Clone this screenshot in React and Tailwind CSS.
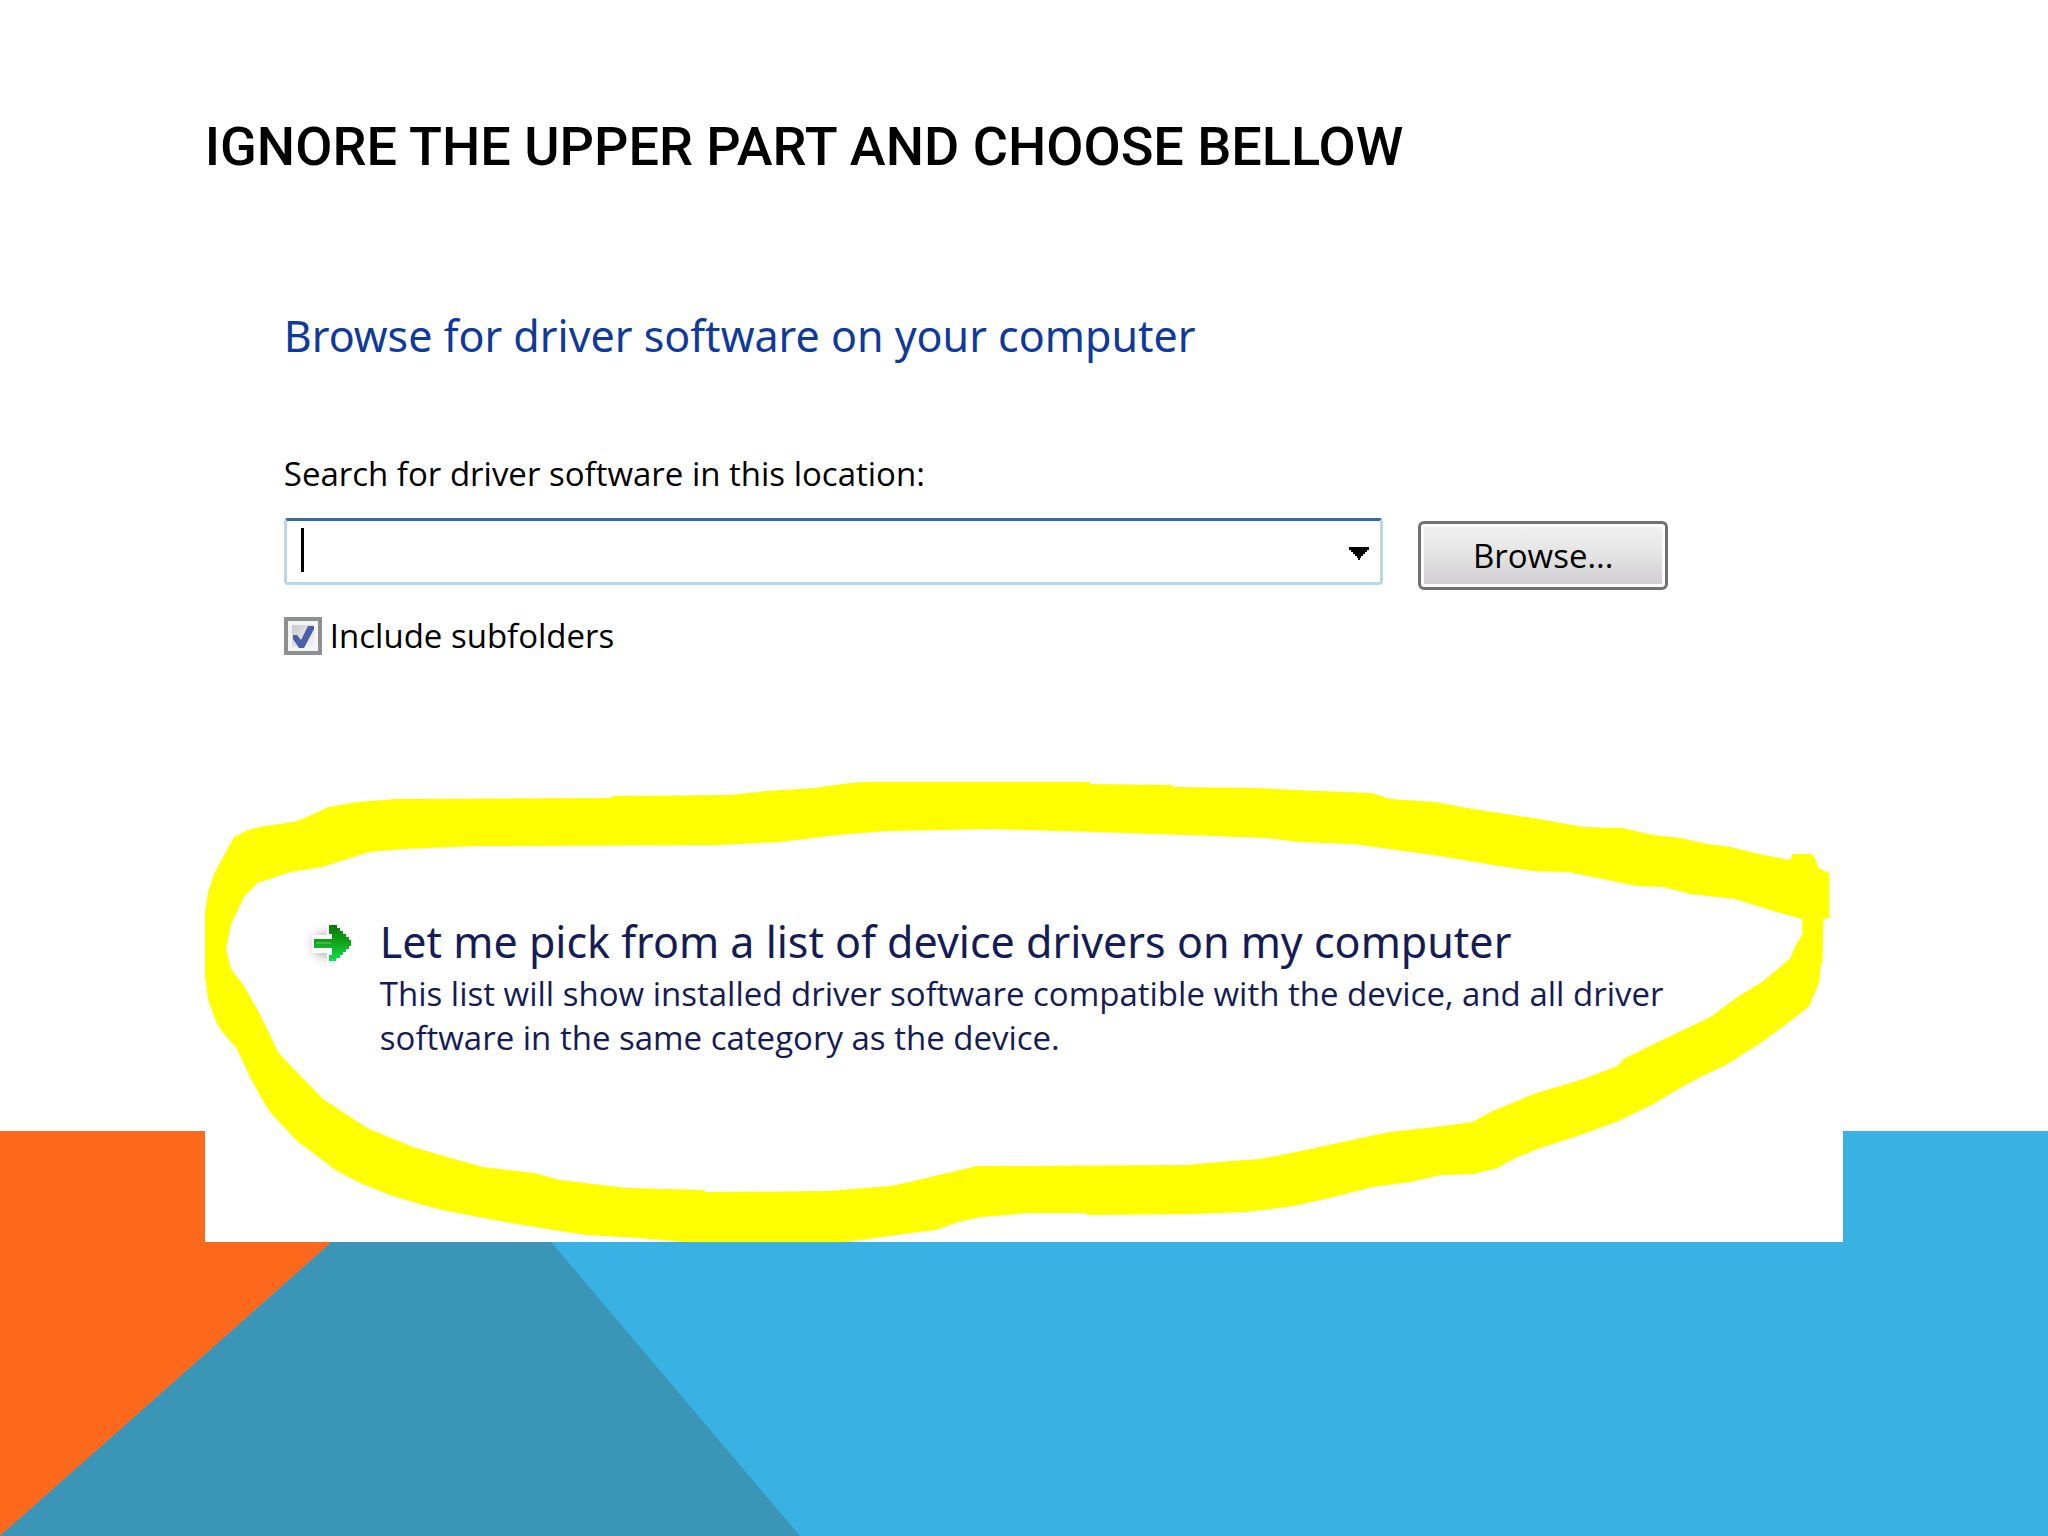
import { useState } from 'react'

const MARKER_OUTER =
    'M205 913L208 893L215 873L223 858L234 838L248 831L264 827L280 825L297 822L318 813L328 808L340 806L357 803L395 800L612 799L612 797L730 796L766 792L815 789L842 785L862 783L1090 783L1090 785L1173 786L1173 788L1255 789L1317 792L1372 794L1390 800L1435 803L1473 810L1533 819L1583 828L1622 829L1653 836L1680 839L1707 845L1730 848L1763 856L1790 861L1792 855L1811 855L1815 860L1818 869L1829 874L1829 919L1823 920L1822 965L1820 967L1819 983L1813 997L1809 1007L1790 1022L1760 1044L1727 1065L1700 1078L1678 1090L1653 1105L1618 1122L1580 1136L1537 1150L1513 1160L1497 1169L1473 1175L1440 1176L1410 1183L1372 1188L1333 1198L1293 1207L1245 1213L1193 1215L1087 1216L1086 1214L1028 1214L980 1218L958 1223L935 1231L910 1234L875 1239L844 1243L688 1243L639 1239L587 1236L560 1232L500 1222L447 1212L423 1206L390 1196L360 1184L337 1172L297 1142L270 1113L262 1100L250 1078L237 1050L220 1030L215 1020L208 1000L205 977Z'

const MARKER_INNER =
    'M226 950L231 925L244 898L257 884L290 873L322 868L369 853L402 850L476 847L719 846L779 843L837 836L886 832L942 831L990 830L1097 833L1187 836L1267 839L1300 843L1353 845L1390 850L1440 857L1493 866L1533 872L1568 873L1637 887L1663 888L1690 895L1735 900L1773 912L1802 920L1802 935L1795 947L1790 959L1763 982L1737 998L1710 1018L1670 1037L1623 1060L1617 1067L1583 1080L1533 1095L1490 1113L1472 1123L1435 1128L1390 1133L1370 1137L1310 1150L1260 1160L1230 1162L1187 1166L977 1167L947 1174L910 1183L890 1187L828 1192L706 1193L703 1191L627 1189L560 1181L534 1174L483 1168L440 1156L413 1148L367 1129L323 1100L287 1063L278 1053L268 1032L258 1012L244 987L231 970Z'

function SlideBackground() {
    return (
        <svg
            className="absolute inset-x-0 bottom-0 -z-10 h-[405px] w-full"
            viewBox="0 0 2048 405"
            preserveAspectRatio="none"
            aria-hidden="true"
        >
            <rect width="2048" height="405" fill="#39b2e3" />
            <path d="M0 0H457L0 405Z" fill="#fd691c" />
            <path d="M457 0L800 405H0Z" fill="#3b95b6" />
        </svg>
    )
}

function MarkerCircle() {
    return (
        <svg
            className="pointer-events-none absolute inset-x-0 bottom-0 w-full"
            viewBox="205 780 1638 463"
            aria-hidden="true"
        >
            <path d={`${MARKER_OUTER}${MARKER_INNER}`} fill="#ffff00" fillRule="evenodd" />
        </svg>
    )
}

function ArrowIcon() {
    return (
        <svg className="h-[60px] w-[60px] shrink-0" viewBox="0 0 60 60" aria-hidden="true">
            <defs>
                <linearGradient id="arrow-fill" x1="0" y1="0" x2="0" y2="1">
                    <stop offset="0" stopColor="#0a7a0a" />
                    <stop offset="0.5" stopColor="#12a51c" />
                    <stop offset="1" stopColor="#10e050" />
                </linearGradient>
                <radialGradient id="arrow-shadow">
                    <stop offset="0.4" stopColor="#cfcfcf" />
                    <stop offset="1" stopColor="#ffffff" stopOpacity="0" />
                </radialGradient>
            </defs>
            <ellipse cx="25" cy="33" rx="25" ry="24" fill="url(#arrow-shadow)" />
            <path
                d="M27 11H34L53 27V34L36 50H27V40H12V24H27Z"
                fill="#ffffff"
                stroke="#ffffff"
                strokeWidth="2"
            />
            <path
                d="M28 13H36V16H39V19H42V22H45V25H48V28H50V34H48V37H45V40H42V43H39V46H35V49H28V43H31V36H13V27H31V22H28Z"
                fill="url(#arrow-fill)"
            />
            <path d="M15 30H30V32H15Z" fill="#3fbb4a" />
        </svg>
    )
}

function Checkbox({ checked, onChange, label }) {
    return (
        <label className="flex items-center gap-2 text-[33px] leading-[38px] text-black">
            <span className="grid h-[38px] w-[38px] place-items-center">
                <input
                    type="checkbox"
                    checked={checked}
                    onChange={onChange}
                    className="peer col-start-1 row-start-1 h-[38px] w-[38px] appearance-none border-4 border-[#8e8f8f] bg-linear-to-br from-[#c3c5cb] to-[#fbfbfc] shadow-[inset_0_0_0_4px_#f4f4f4]"
                />
                <svg
                    className="pointer-events-none invisible col-start-1 row-start-1 h-[26px] w-[26px] peer-checked:visible"
                    viewBox="0 0 26 26"
                    aria-hidden="true"
                >
                    <path d="M3 12H7L11 17L18 3H24V6L14 25H9L3 16Z" fill="#4a5fa5" />
                </svg>
            </span>
            {label}
        </label>
    )
}

function App() {
    const [location, setLocation] = useState('')
    const [includeSubfolders, setIncludeSubfolders] = useState(true)

    return (
        <main className="relative isolate min-h-screen bg-white px-[10%] pt-[115px] font-['Open_Sans','Noto_Sans',sans-serif]">
            <SlideBackground />

            <h1 className="font-['Roboto','Liberation_Sans',sans-serif] text-[54px] leading-[64px] font-medium text-black uppercase">
                Ignore the upper part and choose bellow
            </h1>

            <section className="relative bg-white pt-[127px] pr-[175px] pb-[182px] pl-[79px]">
                <h2 className="font-['Noto_Sans',sans-serif] text-[43px] leading-[60px] text-[#0f3a9b]">
                    Browse for driver software on your computer
                </h2>

                <label htmlFor="location" className="mt-[86px] block text-[33px] leading-[44px] text-black">
                    Search for driver software in this location:
                </label>
                <div className="mt-[22px] flex items-start gap-[35px]">
                    <div className="flex h-[67px] flex-1 items-center rounded-[4px] border-[3px] border-[#b9d6ea] border-t-[#3a6a9c] bg-white pr-[11px] pl-[14px]">
                        <span className="mb-1 h-11 w-[3px] bg-black" />
                        <input
                            id="location"
                            type="text"
                            value={location}
                            onChange={(e) => setLocation(e.target.value)}
                            className="h-full min-w-0 flex-1 bg-transparent text-[33px] outline-none"
                        />
                        <button type="button" aria-label="Show recent locations" className="pt-1">
                            <svg className="h-[13px] w-[20px]" viewBox="0 0 20 13" aria-hidden="true">
                                <path d="M0 0H20V3H18V5H16V7H14V9H12V11H11V13H9V11H8V9H6V7H4V5H2V3H0Z" />
                            </svg>
                        </button>
                    </div>
                    <button
                        type="button"
                        className="mt-[3px] h-[69px] w-[250px] rounded-[6px] border-[3px] border-[#707070] bg-linear-to-b from-[#f2f2f2] from-0% via-[#e6e5e6] via-45% to-[#cfcdcf] to-100% text-[33px] text-black shadow-[inset_0_0_0_3px_#fafafa]"
                    >
                        Browse...
                    </button>
                </div>

                <div className="mt-[27px] flex">
                    <Checkbox
                        checked={includeSubfolders}
                        onChange={(e) => setIncludeSubfolders(e.target.checked)}
                        label="Include subfolders"
                    />
                </div>

                <button type="button" className="mt-[257px] flex items-start gap-[19px] pl-[17px] text-left text-[#151c55]">
                    <ArrowIcon />
                    <span>
                        <span className="block font-['Noto_Sans',sans-serif] text-[43px] leading-[60px]">
                            Let me pick from a list of device drivers on my computer
                        </span>
                        <span className="block text-[33px] leading-[44px]">
                            This list will show installed driver software compatible with the device, and all driver
                            <br />
                            software in the same category as the device.
                        </span>
                    </span>
                </button>

                <MarkerCircle />
            </section>
        </main>
    )
}

export default App
